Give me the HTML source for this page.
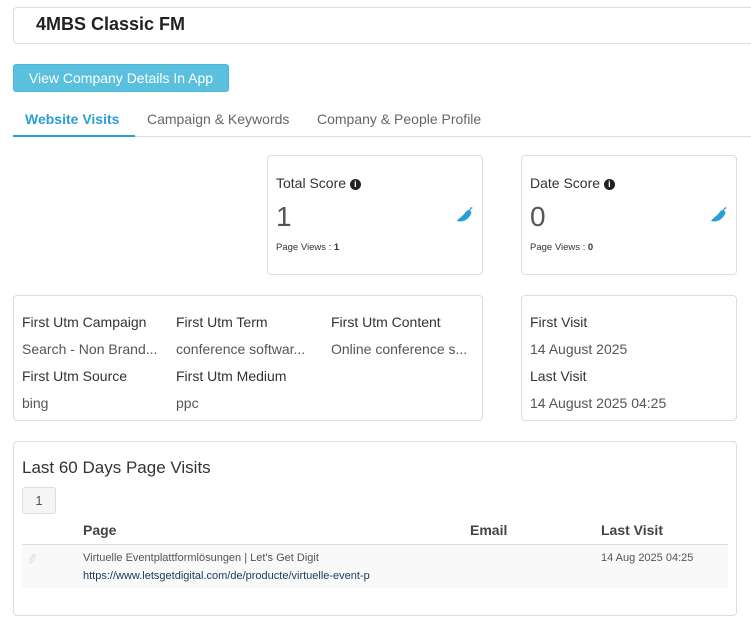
<!DOCTYPE html>
<html><head><meta charset="utf-8"><style>
*{box-sizing:border-box;margin:0;padding:0}
body{width:751px;height:623px;background:#fff;font-family:"Liberation Sans",sans-serif;color:#333;position:relative;overflow:hidden}
.a{position:absolute}
.box{position:absolute;border:1px solid #ddd;border-radius:4px;background:#fff}
.t{position:absolute;white-space:nowrap}
</style></head><body>
<div class="box" style="left:13px;top:7px;width:760px;height:37px"></div>
<div class="t" style="left:36px;top:14px;font-size:18px;font-weight:bold;color:#222">4MBS Classic FM</div>
<div class="a" style="left:13px;top:64px;width:216px;height:28px;background:#5bc0de;border:1px solid #46b8da;border-radius:3px;color:#fff;font-size:14px;line-height:26px;text-align:center">View Company Details In App</div>
<div class="a" style="left:13px;top:136px;width:738px;height:1px;background:#ddd"></div>
<div class="a" style="left:13px;top:135px;width:122px;height:2px;background:#2a9fd6"></div>
<div class="t" style="left:25px;top:111px;font-size:14px;font-weight:bold;color:#2a9fd6">Website Visits</div>
<div class="t" style="left:147px;top:111px;font-size:14px;color:#666">Campaign &amp; Keywords</div>
<div class="t" style="left:317px;top:111px;font-size:14px;color:#666">Company &amp; People Profile</div>

<div class="box" style="left:267px;top:155px;width:216px;height:120px"></div>
<div class="t" style="left:276px;top:175px;font-size:14px">Total Score <span style="display:inline-block;width:11px;height:11px;border-radius:50%;background:#222;color:#fff;font-size:9px;font-weight:bold;text-align:center;line-height:11px;vertical-align:1px">i</span></div>
<div class="t" style="left:276px;top:201px;font-size:28px;color:#555">1</div>
<div class="t" style="left:276px;top:242px;font-size:9.5px">Page Views : <b>1</b></div>
<svg class="a" style="left:456px;top:206px" width="18" height="18" viewBox="0 0 18 18"><path d="M1 15 C7 17 13 13 15 8 C16 6 15 5 14 5 L15 3 L17 2 L15 1 L13 4 C10 4 9 8 6 10 C4 12 2 13 1 15Z" fill="#2a9fd6"/></svg>

<div class="box" style="left:521px;top:155px;width:216px;height:120px"></div>
<div class="t" style="left:530px;top:175px;font-size:14px">Date Score <span style="display:inline-block;width:11px;height:11px;border-radius:50%;background:#222;color:#fff;font-size:9px;font-weight:bold;text-align:center;line-height:11px;vertical-align:1px">i</span></div>
<div class="t" style="left:530px;top:201px;font-size:28px;color:#555">0</div>
<div class="t" style="left:530px;top:242px;font-size:9.5px">Page Views : <b>0</b></div>
<svg class="a" style="left:710px;top:206px" width="18" height="18" viewBox="0 0 18 18"><path d="M1 15 C7 17 13 13 15 8 C16 6 15 5 14 5 L15 3 L17 2 L15 1 L13 4 C10 4 9 8 6 10 C4 12 2 13 1 15Z" fill="#2a9fd6"/></svg>

<div class="box" style="left:13px;top:295px;width:470px;height:126px"></div>
<div style="font-size:14px">
<div class="t" style="left:22px;top:314px">First Utm Campaign</div>
<div class="t" style="left:176px;top:314px">First Utm Term</div>
<div class="t" style="left:331px;top:314px">First Utm Content</div>
<div class="t" style="left:22px;top:341px;color:#555">Search - Non Brand...</div>
<div class="t" style="left:176px;top:341px;color:#555">conference softwar...</div>
<div class="t" style="left:331px;top:341px;color:#555">Online conference s...</div>
<div class="t" style="left:22px;top:368px">First Utm Source</div>
<div class="t" style="left:176px;top:368px">First Utm Medium</div>
<div class="t" style="left:22px;top:395px;color:#555">bing</div>
<div class="t" style="left:176px;top:395px;color:#555">ppc</div>
</div>
<div class="box" style="left:521px;top:295px;width:216px;height:126px"></div>
<div style="font-size:14px">
<div class="t" style="left:530px;top:314px">First Visit</div>
<div class="t" style="left:530px;top:341px;color:#555">14 August 2025</div>
<div class="t" style="left:530px;top:368px">Last Visit</div>
<div class="t" style="left:530px;top:395px;color:#555">14 August 2025 04:25</div>
</div>

<div class="box" style="left:13px;top:441px;width:724px;height:175px"></div>
<div class="t" style="left:22px;top:458px;font-size:17px">Last 60 Days Page Visits</div>
<div class="a" style="left:22px;top:487px;width:34px;height:27px;background:#f5f5f5;border:1px solid #ddd;border-radius:3px;font-size:13px;text-align:center;line-height:25px;color:#555">1</div>
<div class="t" style="left:83px;top:522px;font-size:14px;font-weight:bold;color:#444">Page</div>
<div class="t" style="left:470px;top:522px;font-size:14px;font-weight:bold;color:#444">Email</div>
<div class="t" style="left:601px;top:522px;font-size:14px;font-weight:bold;color:#444">Last Visit</div>
<div class="a" style="left:22px;top:544px;width:706px;height:1px;background:#ddd"></div>
<div class="a" style="left:22px;top:545px;width:706px;height:43px;background:#f9f9f9"></div>
<svg class="a" style="left:27px;top:552px" width="10" height="13" viewBox="0 0 10 13"><path d="M7 3 L3 9 C2 11 4 12 5 10 L8 5 C9 3 7 1 6 3 L2 8" fill="none" stroke="#e6e6e6" stroke-width="1.3"/></svg>
<div class="t" style="left:83px;top:552px;font-size:11px;color:#555">Virtuelle Eventplattformlösungen | Let's Get Digit</div>
<div class="t" style="left:83px;top:570px;font-size:11px;color:#1a3a5a">https://www.letsgetdigital.com/de/producte/virtuelle-event-p</div>
<div class="t" style="left:601px;top:552px;font-size:11px;color:#555">14 Aug 2025 04:25</div>
</body></html>
